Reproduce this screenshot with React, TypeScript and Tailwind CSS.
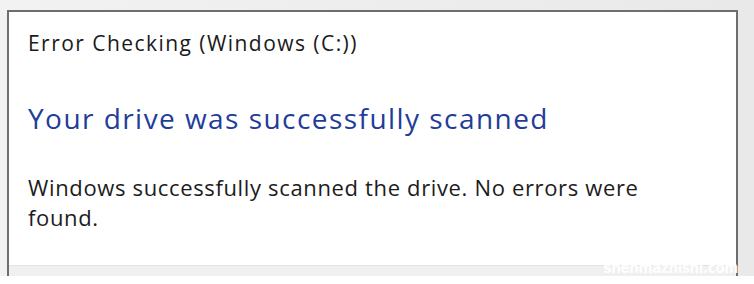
import React from 'react';

const font = { fontFamily: '"Open Sans", "Noto Sans", sans-serif' };

export default function App() {
  return (
    <div className="relative h-[284px] w-[754px] overflow-hidden bg-white" style={font}>
      <div className="h-[276px] bg-gradient-to-r from-[#f2f2f2] to-[#e9e9e9] pt-[10px] pl-[7px]">
        <div className="flex h-[266px] w-[731px] flex-col border-x-2 border-t-2 border-[#6e6e6e] bg-white">
          <div className="flex-1 pl-[19px] pt-[17px]">
            <h1 className="text-[21px] leading-[28px] tracking-[1.45px] text-[#1a1a1a]">Error Checking (Windows (C:))</h1>
            <h2 className="mt-[43px] text-[28px] leading-[36px] tracking-[1.45px] text-[#1f3d99]">Your drive was successfully scanned</h2>
            <p className="mt-[36px] w-[650px] text-[22px] leading-[30px] tracking-[0.65px] text-[#1c1c1c]">
              Windows successfully scanned the drive. No errors were found.
            </p>
          </div>
          <div className="h-[11px] border-t border-[#e2e2e2] bg-[#f0f0f0]" />
        </div>
      </div>
      <div className="absolute right-[16px] bottom-[5px] text-[15px] font-bold tracking-tight text-white/90" style={{ fontFamily: '"Liberation Sans Narrow", "DejaVu Sans Condensed", sans-serif' }}>
        shenmazhishi.com
      </div>
    </div>
  );
}
